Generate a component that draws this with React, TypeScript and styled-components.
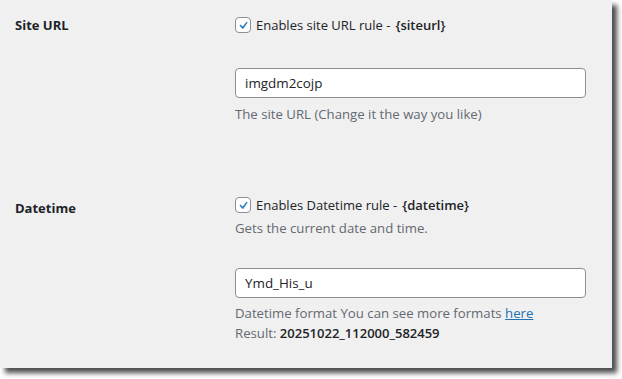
import styled, { createGlobalStyle } from 'styled-components';

const GlobalStyle = createGlobalStyle`
  html, body {
    margin: 0;
    padding: 0;
    background: #ffffff;
  }
  body {
    font-family: "Open Sans", "Noto Sans", sans-serif;
    color: #1d2327;
  }
`;

const Frame = styled.div`
  width: 622px;
  height: 379px;
  overflow: hidden;
`;

const Panel = styled.div`
  width: 612px;
  height: 368px;
  background: #f0f0f1;
  box-shadow: 5px 5px 5px rgba(0, 0, 0, 0.7);
`;

const Row = styled.div<{ $top: number; $height: number }>`
  display: grid;
  grid-template-columns: 235px 1fr;
  padding-top: ${p => p.$top}px;
  height: ${p => p.$height}px;
  box-sizing: border-box;
`;

const Label = styled.div<{ $drop?: number }>`
  padding-left: 15px;
  padding-top: ${p => 6 + (p.$drop ?? 0)}px;
  font-size: 13px;
  font-weight: 700;
  line-height: 20px;
`;

const Field = styled.div`
  display: flex;
  flex-direction: column;
  padding-right: 26px;
`;

const CheckLine = styled.label`
  display: flex;
  align-items: center;
  gap: 5px;
  height: 20px;
  font-size: 13px;
  padding-top: 6px;
`;

const Box = styled.span`
  width: 14px;
  height: 14px;
  border: 1px solid #8c8f94;
  border-radius: 4px;
  background: #fff;
  display: inline-flex;
  align-items: center;
  justify-content: center;
`;

const Code = styled.b`
  font-weight: 600;
`;

const Description = styled.p<{ $gap?: number }>`
  margin: ${p => p.$gap ?? 0}px 0 0;
  font-size: 13.2px;
  line-height: 20px;
  color: #646970;
`;

const Input = styled.input<{ $gap: number }>`
  box-sizing: border-box;
  width: 351px;
  height: 30px;
  margin-top: ${p => p.$gap}px;
  border: 1px solid #8c8f94;
  border-radius: 4px;
  background: #fff;
  padding: 0 9px;
  font-family: inherit;
  font-size: 13.4px;
  color: #1d2327;
  outline: none;
`;

const Strong = styled.span`
  color: #1d2327;
  font-weight: 600;
  font-size: 13px;
`;

const Link = styled.a`
  color: #2271b1;
  text-decoration: underline;
`;

const Check = () => (
  <Box>
    <svg width="17" height="17" viewBox="0 0 20 20">
      <path d="M15 4.6l1.7 1.2-6.1 9H8.8L5 10.1l1.5-1.4 3.1 2.9z" fill="#3582c4" />
    </svg>
  </Box>
);

export default function App() {
  return (
    <>
      <GlobalStyle />
      <Frame>
        <Panel>
          <Row $top={9} $height={180}>
            <Label>Site URL</Label>
            <Field>
              <CheckLine>
                <Check />
                Enables site URL rule - <Code>{'{siteurl}'}</Code>
              </CheckLine>
              <Input defaultValue="imgdm2cojp" $gap={33} />
              <Description $gap={6}>The site URL (Change it the way you like)</Description>
            </Field>
          </Row>
          <Row $top={9} $height={188}>
            <Label $drop={3}>Datetime</Label>
            <Field>
              <CheckLine>
                <Check />
                Enables Datetime rule - <Code>{'{datetime}'}</Code>
              </CheckLine>
              <Description $gap={3}>Gets the current date and time.</Description>
              <Input defaultValue="Ymd_His_u" $gap={30} />
              <Description $gap={5}>
                Datetime format You can see more formats <Link href="#">here</Link>
              </Description>
              <Description>
                Result: <Strong>20251022_112000_582459</Strong>
              </Description>
            </Field>
          </Row>
        </Panel>
      </Frame>
    </>
  );
}
